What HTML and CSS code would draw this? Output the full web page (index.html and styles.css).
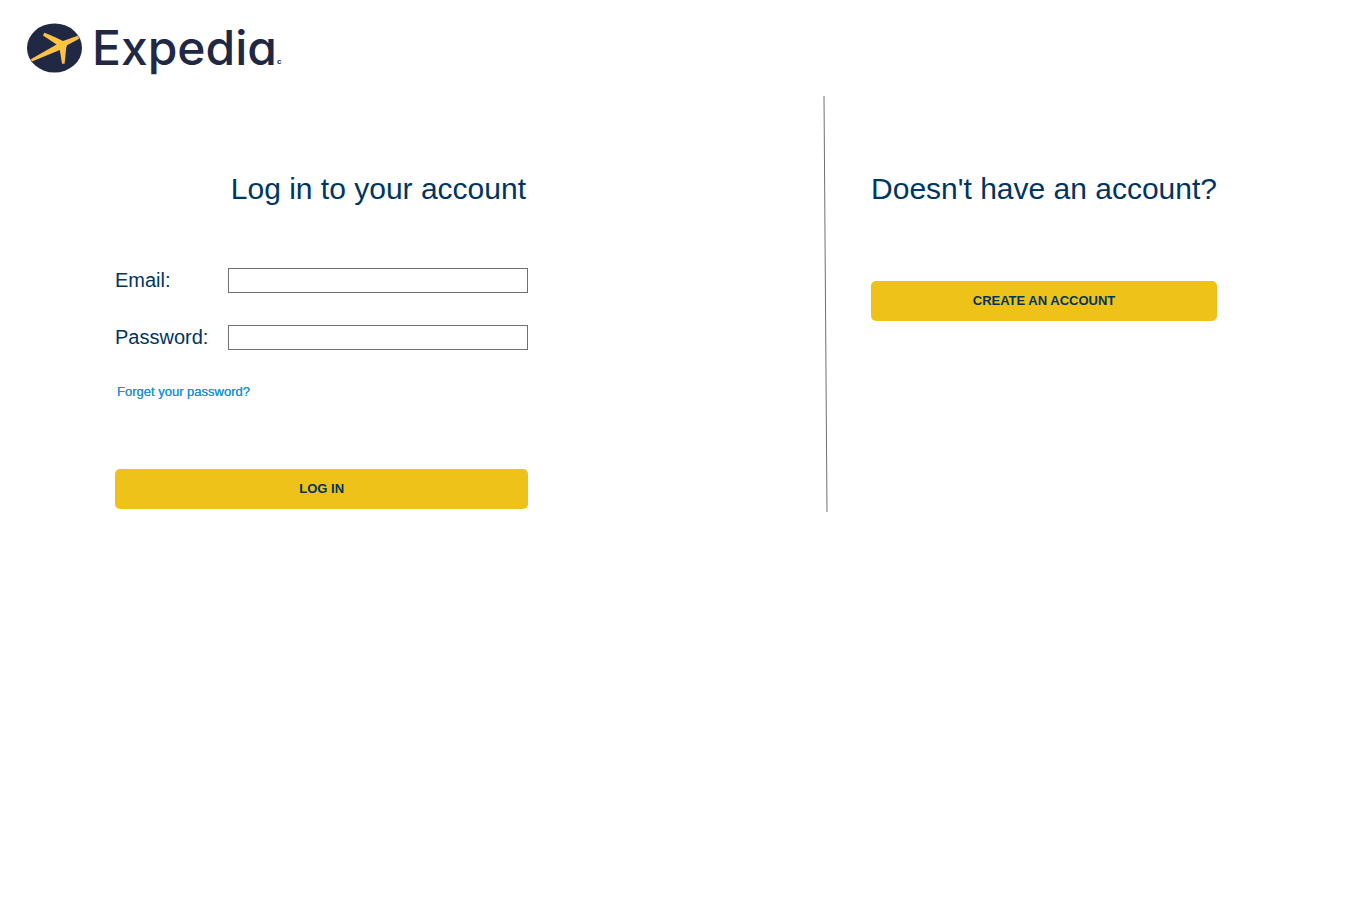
FILE: index.html
```html
<!DOCTYPE html>
<html lang="en">
<head>
<meta charset="utf-8">
<meta name="viewport" content="width=device-width, initial-scale=1">
<title>Expedia - Log in</title>
<link rel="stylesheet" href="styles.css">
</head>
<body>
<header class="header">
  <a class="logo" href="#">
    <svg class="logo-mark" viewBox="0 0 55 50" aria-hidden="true">
      <ellipse cx="27.5" cy="25" rx="27.5" ry="24.5" fill="#202843"/>
      <path fill="#fbc343" d="M17.3 9.8Q18.6 9.8 36 18L50.8 12.8 52.2 15.8 40 22.2 39.2 25 37.6 40.8 35 40.8 32.8 27 5 38.4 3.8 36.2 29.6 21.4 16 12.4Z"/>
    </svg>
    <span class="logo-name">Expedia</span><span class="logo-dot">c</span>
  </a>
</header>
<main class="main">
  <section class="login">
    <form class="form">
      <h1 class="title form-title">Log in to your account</h1>
      <label class="label" for="email">Email:</label>
      <input class="input" id="email" type="email">
      <label class="label" for="password">Password:</label>
      <input class="input" id="password" type="password">
      <a class="forgot" href="#">Forget your password?</a>
      <button class="button form-button" type="button">LOG IN</button>
    </form>
  </section>
  <svg class="divider" viewBox="0 0 5 416" preserveAspectRatio="none" aria-hidden="true">
    <line x1="1" y1="0" x2="4" y2="416" stroke="#707070"/>
  </svg>
  <section class="signup">
    <h2 class="title">Doesn't have an account?</h2>
    <button class="button" type="button">CREATE AN ACCOUNT</button>
  </section>
</main>
</body>
</html>
```
FILE: styles.css
```css
* {
  box-sizing: border-box;
}

body {
  margin: 0;
  background: #fff;
  color: #00355f;
  font-family: "Liberation Sans", Arial, sans-serif;
}

.header {
  padding: 23px 27px 0;
}

.logo {
  display: inline-flex;
  align-items: flex-start;
  height: 73px;
  color: #202843;
  text-decoration: none;
}

.logo-mark {
  width: 55px;
  height: 50px;
  margin-right: 10px;
}

.logo-name {
  font: 500 48px/50px Inter, sans-serif;
  font-feature-settings: "cv11";
}

.logo-dot {
  padding-top: 35px;
  font-size: 8px;
  line-height: 8px;
  font-weight: 700;
}

.main {
  display: flex;
  padding: 0 149px 0 115px;
}

.login {
  flex: 1;
  padding-top: 76px;
}

.form {
  display: grid;
  grid-template-columns: max-content 300px;
  column-gap: 20px;
  justify-content: start;
  align-items: center;
}

.title {
  margin: 0;
  font-size: 30px;
  line-height: 34px;
  font-weight: 400;
  text-align: center;
  white-space: nowrap;
}

.form-title {
  grid-column: 2;
  margin-bottom: 62px;
}

.label {
  grid-column: 1;
  margin-bottom: 32px;
  font-size: 20px;
  line-height: 25px;
}

.input {
  width: 100%;
  height: 25px;
  margin: 0 0 32px;
  padding: 1px 4px;
  border: 1px solid #707070;
  background: #fff;
}

.forgot {
  grid-column: 1 / -1;
  justify-self: start;
  padding-left: 2px;
  margin: 2px 0 69px;
  color: #1d93d2;
  font-size: 13px;
  line-height: 16px;
  text-decoration: none;
  text-shadow: 0 0 0 currentColor;
}

.button {
  width: 100%;
  height: 40px;
  padding: 0;
  border: 0;
  border-radius: 5px;
  background: #eec218;
  color: #00355f;
  font-family: inherit;
  font-size: 13px;
  font-weight: 700;
  line-height: 16px;
  cursor: pointer;
}

.form-button {
  grid-column: 1 / -1;
}

.divider {
  width: 5px;
  height: 416px;
  margin-right: 43px;
}

.signup {
  padding-top: 76px;
}

.signup .title {
  margin-bottom: 75px;
}

@media (max-width: 1000px) {
  .main {
    flex-direction: column;
    padding: 0 24px;
  }

  .divider {
    display: none;
  }
}
```
